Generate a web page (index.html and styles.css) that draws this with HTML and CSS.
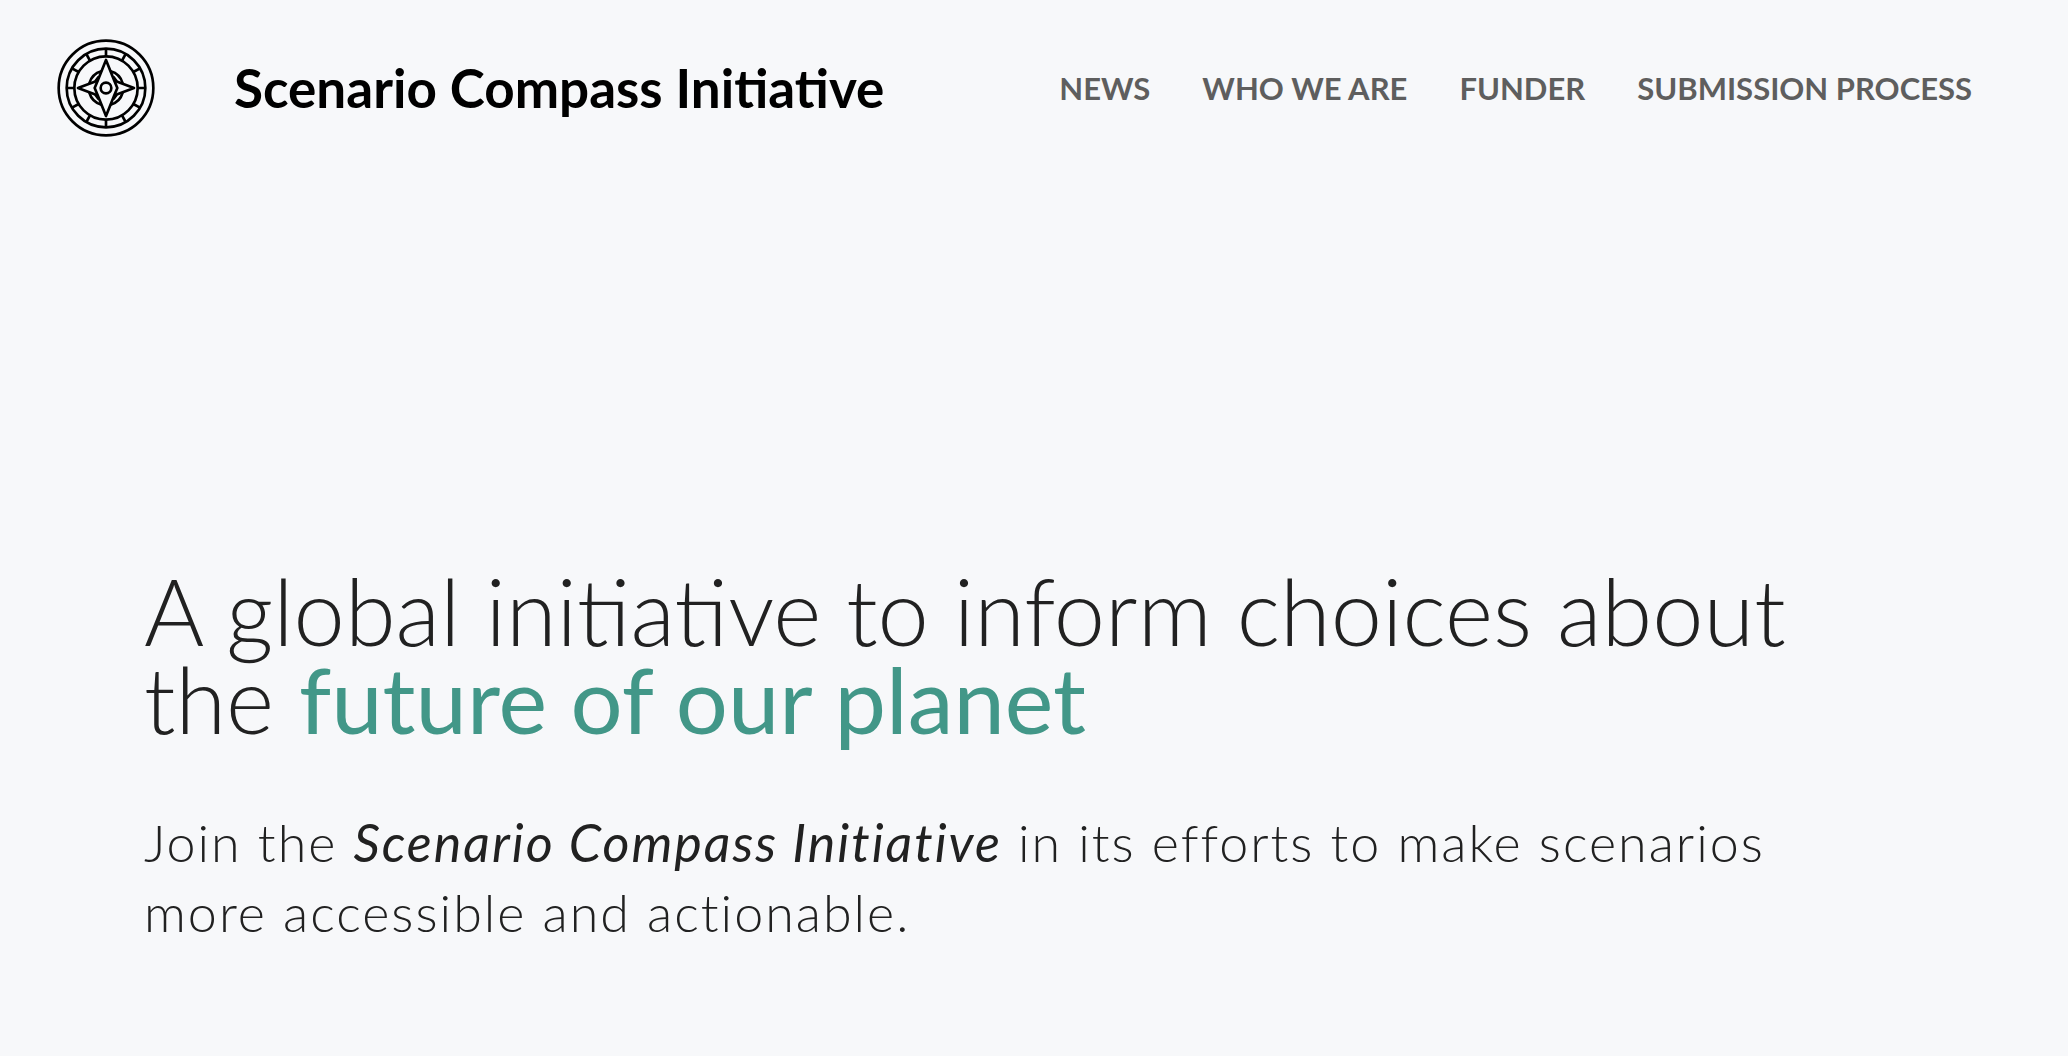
FILE: index.html
```
<!DOCTYPE html>
<html lang="en">
<head>
<meta charset="utf-8">
<meta name="viewport" content="width=device-width, initial-scale=1">
<title>Scenario Compass Initiative</title>
<link rel="stylesheet" href="styles.css">
</head>
<body>
<header class="site-header">
  <a class="brand" href="#">
    <svg class="logo" viewBox="-150 -150 300 300" aria-hidden="true">
      <circle r="142"/><circle r="118"/><circle r="95"/><circle r="16"/>
      <path d="M0-118V-95M0 118V95M-118 0H-95M118 0H95M59-102 48-82M102-59 82-48M102 59 82 48M59 102 48 82M-59 102-48 82M-102 59-82 48M-102-59-82-48M-59-102-48-82"/>
      <path d="M0-84 24-24 34 0 24 24 0 84-24 24-34 0-24-24Z"/>
      <path d="M26-22 84 0 26 22M-26-22-84 0-26 22"/>
      <path d="M14-50A52 52 0 0 1 50-14M50 14A52 52 0 0 1 14 50M-14 50A52 52 0 0 1-50 14M-50-14A52 52 0 0 1-14-50"/>
      <path d="M22-34 32-20M22 34 32 20M-22 34-32 20M-22-34-32-20"/>
    </svg>
    <span class="brand-name">Scenario Compass Initiative</span>
  </a>
  <nav class="nav">
    <a href="#">NEWS</a>
    <a href="#">WHO WE ARE</a>
    <a href="#">FUNDER</a>
    <a href="#">SUBMISSION PROCESS</a>
  </nav>
</header>
<main class="hero">
  <h1 class="headline">A global initiative to inform choices about the <strong>future of our planet</strong></h1>
  <p class="lead">Join the <em>Scenario Compass Initiative</em> in its efforts to make scenarios more accessible and actionable.</p>
</main>
</body>
</html>
```
FILE: styles.css
```
body { margin: 0; background: #f7f8fa; font-family: Lato, sans-serif; color: #212121; }
.site-header { display: flex; align-items: center; justify-content: space-between; padding: 38px 96px 38px 56px; }
.brand { display: flex; align-items: center; gap: 78px; color: #000; text-decoration: none; }
.logo { width: 100px; height: 100px; fill: none; stroke: #000; stroke-width: 8; stroke-linejoin: round; }
.brand-name { font-size: 53px; font-weight: 700; line-height: 64px; }
.nav { display: flex; gap: 52px; }
.nav a { color: #5e5e5e; font-size: 31px; font-weight: 700; text-decoration: none; }
.hero { padding: 391px 144px 0; max-width: 1680px; }
.headline { margin: 0; font-size: 92px; font-weight: 300; line-height: 88px; }
.headline strong { color: #429788; font-weight: 400; }
.lead { margin: 64px 0 0; font-size: 52px; font-weight: 300; line-height: 70px; letter-spacing: 2px; }
.lead em { font-weight: 400; }
```
